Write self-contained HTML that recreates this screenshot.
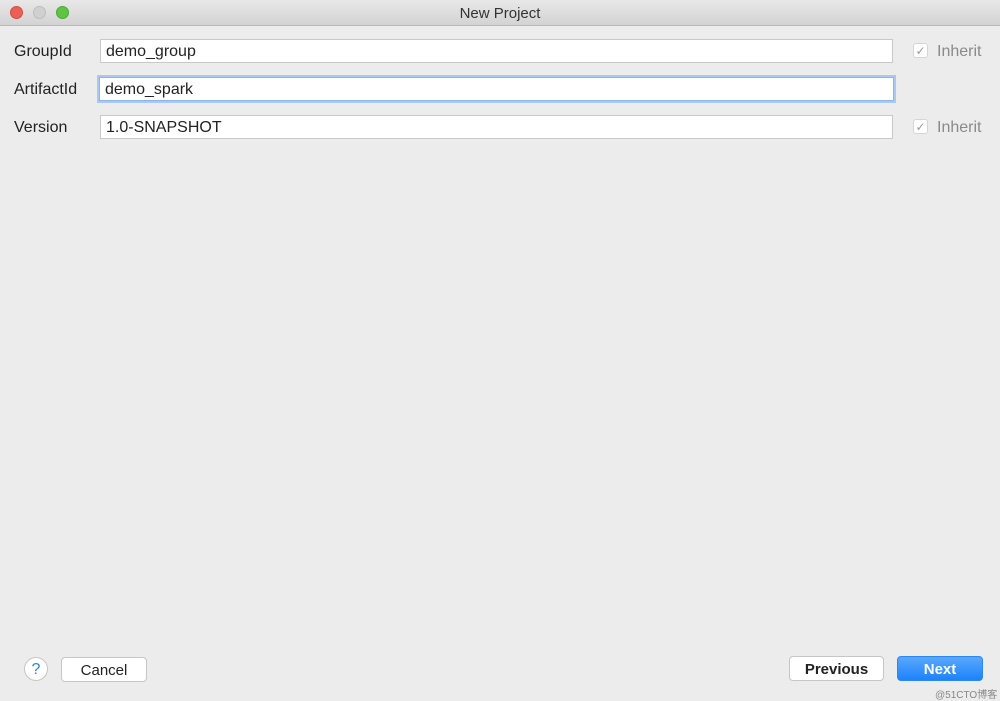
<!DOCTYPE html>
<html><head><style>
body{margin:0;width:1000px;height:701px;background:#ececec;font-family:"Liberation Sans",sans-serif;position:relative;overflow:hidden}
.tb{position:absolute;left:0;top:0;width:1000px;height:25px;background:linear-gradient(#e8e8e8,#d3d3d3);border-bottom:1px solid #b9b9b9;text-align:center;font-size:15px;line-height:28px;color:#333}
.dot{position:absolute;top:6px;width:13px;height:13px;border-radius:50%}
.lbl{position:absolute;left:14px;font-size:16px;color:#222}
.in{position:absolute;left:100px;width:790px;height:24px;background:#fff;border:1px solid #c9c9c9;box-sizing:border-box;font-size:16px;line-height:24px;padding-left:5px;color:#222}
.cb{position:absolute;left:913px;width:15px;height:15px;background:#fff;border:1px solid #d5d5d5;border-radius:3px;box-sizing:border-box;color:#999;font-size:12px;text-align:center;line-height:14px}
.inh{position:absolute;left:937px;font-size:16px;color:#8a8a8a}
.btn{position:absolute;height:25px;box-sizing:border-box;background:#fff;border:1px solid #c6c6c6;border-radius:4px;font-size:15px;text-align:center;line-height:25px;color:#222}
</style></head><body>
<div class="tb">New Project</div>
<div class="dot" style="left:10px;background:#ec5f57;border:1px solid #d44c45;box-sizing:border-box"></div>
<div class="dot" style="left:33px;background:#d0d0d0;border:1px solid #bdbdbd;box-sizing:border-box"></div>
<div class="dot" style="left:56px;background:#5fc443;border:1px solid #4caa36;box-sizing:border-box"></div>

<div class="lbl" style="top:43px">GroupId</div>
<div class="in" style="top:39px;width:793px">demo_group</div>
<div class="cb" style="top:43px">✓</div><div class="inh" style="top:43px">Inherit</div>

<div class="lbl" style="top:81px">ArtifactId</div>
<div class="in" style="top:77px;left:99px;width:795px;border:1px solid #8db5ea;box-shadow:0 0 0 2px #a9c9f3">demo_spark</div>

<div class="lbl" style="top:119px">Version</div>
<div class="in" style="top:115px;width:793px">1.0-SNAPSHOT</div>
<div class="cb" style="top:119px">✓</div><div class="inh" style="top:119px">Inherit</div>

<div style="position:absolute;left:24px;top:657px;width:24px;height:24px;border-radius:50%;background:#fff;border:1px solid #c6c6c6;box-sizing:border-box;color:#2a7ff5;font-size:16px;text-align:center;line-height:24px">?</div>
<div class="btn" style="left:61px;top:657px;width:86px">Cancel</div>
<div class="btn" style="left:789px;top:656px;width:95px;font-weight:bold">Previous</div>
<div class="btn" style="left:897px;top:656px;width:86px;background:linear-gradient(#5aa8fd,#1c83fb);border-color:#2b87f5;color:#fff;font-weight:bold">Next</div>
<div style="position:absolute;left:935px;top:686px;font-size:10px;color:#888;font-family:'Liberation Sans','Noto Sans CJK SC',sans-serif">@51CTO博客</div>
</body></html>
